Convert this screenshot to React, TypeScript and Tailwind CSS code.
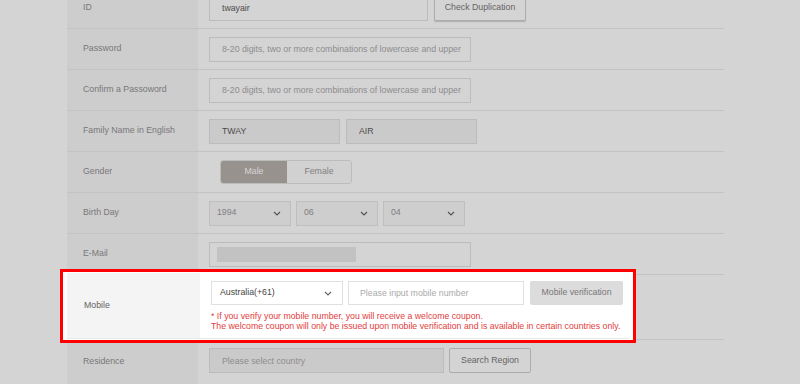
import type { ReactNode } from 'react';

function Chevron() {
  return (
    <svg width="8" height="5" viewBox="0 0 8 5" className="shrink-0">
      <path d="M1 1l3 3 3-3" fill="none" stroke="#666" strokeWidth="1.2" />
    </svg>
  );
}

function Row({ label, children, tall }: { label: string; children: ReactNode; tall?: boolean }) {
  return (
    <div className="flex border-b border-[#ebebeb]">
      <div className="w-[131px] shrink-0 bg-[#f7f7f7] flex items-center pl-[16px] text-[#909090]">{label}</div>
      <div
        className={
          tall
            ? 'flex items-start gap-[5px] h-[44px] pt-[8px] pl-[11px]'
            : 'flex items-center gap-[5px] h-[40px] pl-[11px]'
        }
      >
        {children}
      </div>
    </div>
  );
}

function TextBox({ w, value, placeholder, muted }: { w: string; value?: string; placeholder?: string; muted?: boolean }) {
  return (
    <input
      readOnly
      value={value}
      placeholder={placeholder}
      className={`${w} h-[25px] border border-[#e3e3e3] pl-[12px] pr-[9px] text-[#5a5a5a] placeholder:text-[#aaa] outline-none ${
        muted ? 'bg-[#f3f3f3]' : 'bg-white'
      }`}
    />
  );
}

function SelectBox({ value, w }: { value: string; w: string }) {
  return (
    <div className={`${w} h-[25px] border border-[#e6e6e6] bg-[#f8f8f8] flex items-center justify-between pl-[7px] pr-[9px] text-[#999]`}>
      <span>{value}</span>
      <Chevron />
    </div>
  );
}

export default function App() {
  return (
    <div className="relative h-[384px] w-[800px] overflow-hidden bg-white font-['Liberation_Sans',Arial,sans-serif] text-[8.75px]">
      <div className="pl-[67px] -mt-[12px] w-[724px]">
        <Row label="ID">
          <TextBox w="w-[219px]" value="twayair" />
          <button className="w-[92px] h-[26px] border border-[#cfcfcf] rounded-[2px] bg-white text-[#777] shadow-[0_1px_1px_rgba(0,0,0,0.18)] ml-px">
            Check Duplication
          </button>
        </Row>
        <Row label="Password">
          <TextBox
            w="w-[262px]"
            placeholder="8-20 digits, two or more combinations of lowercase and uppercase letters, numbers and special characters"
          />
        </Row>
        <Row label="Confirm a Passoword">
          <TextBox
            w="w-[262px]"
            placeholder="8-20 digits, two or more combinations of lowercase and uppercase letters, numbers and special characters"
          />
        </Row>
        <Row label="Family Name in English">
          <div className="flex gap-[6px]">
            <TextBox w="w-[131px]" value="TWAY" muted />
            <TextBox w="w-[131px]" value="AIR" muted />
          </div>
        </Row>
        <Row label="Gender">
          <div className="ml-[11px] flex h-[24px] rounded-[3px] overflow-hidden border border-[#e3e3e3]">
            <div className="w-[66px] bg-[#b6b0ab] text-white flex items-center justify-center">Male</div>
            <div className="w-[64px] bg-[#fcfcfc] text-[#999] flex items-center justify-center">Female</div>
          </div>
        </Row>
        <Row label="Birth Day">
          <SelectBox w="w-[82px]" value="1994" />
          <SelectBox w="w-[82px]" value="06" />
          <SelectBox w="w-[82px]" value="04" />
        </Row>
        <Row label="E-Mail">
          <div className="w-[262px] h-[25px] border border-[#e3e3e3] bg-white flex items-center pl-[7px]">
            <div className="w-[139px] h-[15px] bg-[#eaeaea]" />
          </div>
        </Row>

        {/* Mobile row, lifted above the dim layer */}
        <div className="flex h-[65px] border-b border-[#ebebeb]">
          <div className="relative z-20 -ml-[4px] -mt-[3px] -mb-[1px] w-[570px] bg-white px-[4px] py-px outline-[3px] outline-solid outline-[#ff0000]">
            <div className="flex h-[66px] border-b border-[#e8e8e8]">
              <div className="w-[133px] shrink-0 bg-[#f4f4f4] flex items-center pl-[17px] text-[#5f5f5f]">Mobile</div>
              <div className="pl-[11px] pt-[8px]">
                <div className="flex gap-[5px]">
                  <div className="w-[132px] h-[24px] border border-[#e0e0e0] flex items-center justify-between pl-[8px] pr-[10px] text-[#444]">
                    <span>Australia(+61)</span>
                    <Chevron />
                  </div>
                  <input
                    readOnly
                    placeholder="Please input mobile number"
                    className="w-[176px] h-[24px] border border-[#e0e0e0] pl-[11px] placeholder:text-[#aaa] outline-none"
                  />
                  <button className="w-[93px] h-[24px] ml-px bg-[#dcdcdc] rounded-[2px] text-[#777]">Mobile verification</button>
                </div>
                <div className="mt-[6px] leading-[10px] text-[#e23d3d]">
                  <div>* If you verify your mobile number, you will receive a welcome coupon.</div>
                  <div>The welcome coupon will only be issued upon mobile verification and is available in certain countries only.</div>
                </div>
              </div>
            </div>
          </div>
        </div>

        <Row label="Residence" tall>
          <TextBox w="w-[235px]" placeholder="Please select country" muted />
          <button className="w-[82px] h-[25px] border border-[#cfcfcf] rounded-[2px] bg-white text-[#777]">Search Region</button>
        </Row>
      </div>

      <div className="pointer-events-none absolute inset-0 z-10 bg-[rgba(8,0,3,0.17)]" />
    </div>
  );
}
